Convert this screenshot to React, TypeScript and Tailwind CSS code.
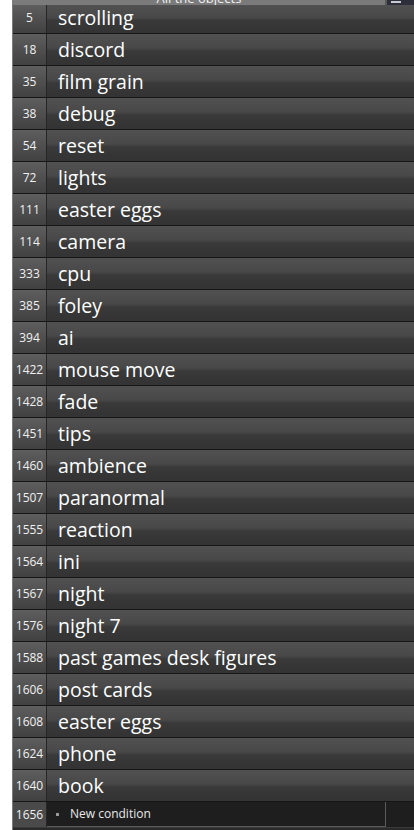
const ROWS: [number, string][] = [
  [5, 'scrolling'],
  [18, 'discord'],
  [35, 'film grain'],
  [38, 'debug'],
  [54, 'reset'],
  [72, 'lights'],
  [111, 'easter eggs'],
  [114, 'camera'],
  [333, 'cpu'],
  [385, 'foley'],
  [394, 'ai'],
  [1422, 'mouse move'],
  [1428, 'fade'],
  [1451, 'tips'],
  [1460, 'ambience'],
  [1507, 'paranormal'],
  [1555, 'reaction'],
  [1564, 'ini'],
  [1567, 'night'],
  [1576, 'night 7'],
  [1588, 'past games desk figures'],
  [1606, 'post cards'],
  [1608, 'easter eggs'],
  [1624, 'phone'],
  [1640, 'book'],
]

const font = { fontFamily: '"Open Sans", "Noto Sans", sans-serif' }

function Row({ num, name, first }: { num: number; name: string; first?: boolean }) {
  return (
    <div className={`flex ${first ? 'h-[29px]' : 'h-8'} border-b border-[#161616]`}>
      <div
        className={`w-[34px] flex items-center justify-center text-[12px] text-[#f0f0f0] bg-gradient-to-b from-[#5e5e5e] to-[#414141] border-r border-[#262626] ${first ? 'pb-[3px]' : ''}`}
      >
        {num}
      </div>
      <div
        className={`flex-1 flex items-center pl-[11px] text-[19.5px] text-white bg-[linear-gradient(to_bottom,#515151_0%,#484848_45%,#393939_55%,#333333_100%)] ${first ? 'pb-[3px]' : ''}`}
      >
        <span className="leading-none">{name}</span>
      </div>
    </div>
  )
}

export default function App() {
  return (
    <div className="w-[414px] h-[830px] bg-white pl-3 overflow-hidden" style={font}>
      <div className="h-full border-l border-[#7c7c7c] bg-[#2a2a2a] flex flex-col">
        {/* Header */}
        <div className="h-[5px] flex shrink-0">
          <div className="flex-1 bg-[#7b7b7b] overflow-hidden flex justify-center">
            <span className="text-[13px] leading-none text-[#f2f2f2] -mt-[8px]">All the objects</span>
          </div>
          <div className="w-[2px] bg-[#5a5a5a]" />
          <div className="w-[27px] bg-[#2e2d3a] overflow-hidden pl-1">
            <div className="w-[10px] h-[2px] bg-[#c8c8d0] mt-[1px]" />
          </div>
        </div>

        {ROWS.map(([n, name], i) => (
          <Row key={n + name} num={n} name={name} first={i === 0} />
        ))}

        {/* New condition row */}
        <div className="flex h-[26px] border-b border-[#3a3a3a]">
          <div className="w-[34px] flex items-center justify-center text-[12px] text-[#f0f0f0] bg-[#4a4a4a] border-r border-[#262626]">
            1656
          </div>
          <div className="flex-1 flex bg-[#1e1e1e]">
            <div className="w-[339px] flex items-center border-r border-b border-[#5a5a5a]">
              <span className="w-[3px] h-[3px] bg-[#9a9a9a] ml-[9px]" />
              <span className="ml-[11px] text-[12px] text-[#e8e8e8]">New condition</span>
            </div>
          </div>
        </div>
      </div>
    </div>
  )
}
